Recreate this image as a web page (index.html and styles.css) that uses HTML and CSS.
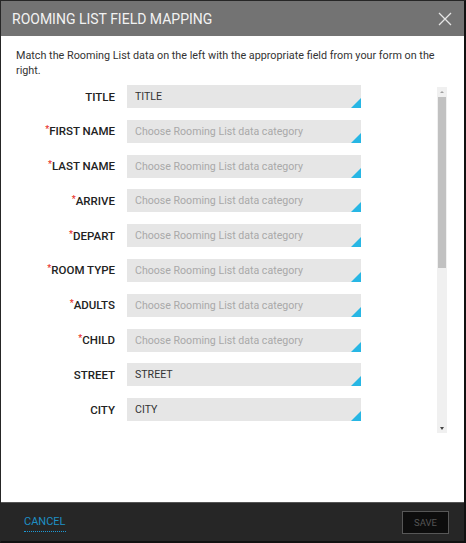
FILE: index.html
```html
<!DOCTYPE html>
<html>
<head>
  <meta charset="utf-8">
  <title>Rooming List Field Mapping</title>
  <link rel="stylesheet" href="styles.css">
</head>
<body>
  <div class="dialog">
    <div class="header">
      <h1>ROOMING LIST FIELD MAPPING</h1>
      <button class="close" aria-label="Close">
        <svg width="14" height="14" viewBox="0 0 14 14">
          <path d="M1 1 L13 13 M13 1 L1 13" stroke="#e6e6e6" stroke-width="1.3" fill="none"/>
        </svg>
      </button>
    </div>

    <div class="content">
      <p class="intro">Match the Rooming List data on the left with the appropriate field from your form on the right.</p>

      <div class="mapping">
        <div class="rows">
          <div class="row">
            <label>TITLE</label>
            <div class="field filled">TITLE</div>
          </div>
          <div class="row">
            <label><span class="req">*</span>FIRST NAME</label>
            <div class="field">Choose Rooming List data category</div>
          </div>
          <div class="row">
            <label><span class="req">*</span>LAST NAME</label>
            <div class="field">Choose Rooming List data category</div>
          </div>
          <div class="row">
            <label><span class="req">*</span>ARRIVE</label>
            <div class="field">Choose Rooming List data category</div>
          </div>
          <div class="row">
            <label><span class="req">*</span>DEPART</label>
            <div class="field">Choose Rooming List data category</div>
          </div>
          <div class="row">
            <label><span class="req">*</span>ROOM TYPE</label>
            <div class="field">Choose Rooming List data category</div>
          </div>
          <div class="row">
            <label><span class="req">*</span>ADULTS</label>
            <div class="field">Choose Rooming List data category</div>
          </div>
          <div class="row">
            <label><span class="req">*</span>CHILD</label>
            <div class="field">Choose Rooming List data category</div>
          </div>
          <div class="row">
            <label>STREET</label>
            <div class="field filled">STREET</div>
          </div>
          <div class="row">
            <label>CITY</label>
            <div class="field filled">CITY</div>
          </div>
        </div>

        <div class="scrollbar">
          <div class="arrow up"></div>
          <div class="thumb"></div>
          <div class="track"></div>
          <div class="arrow down"></div>
        </div>
      </div>
    </div>

    <div class="footer">
      <a class="cancel" href="#">CANCEL</a>
      <button class="save">SAVE</button>
    </div>
  </div>
</body>
</html>
```

FILE: styles.css
```css
body {
  margin: 0;
  font-family: Roboto, "Liberation Sans", sans-serif;
  background: #ffffff;
}

.dialog {
  width: 466px;
  height: 543px;
  box-sizing: border-box;
  border: 1px solid #262626;
  border-right: 2px solid #111;
  border-bottom: 2px solid #111;
  display: flex;
  flex-direction: column;
  background: #fff;
}

.header {
  height: 35px;
  background: #737373;
  display: flex;
  align-items: center;
  justify-content: space-between;
  padding: 0 12px 0 11px;
  flex-shrink: 0;
}

.header h1 {
  margin: 0;
  font-size: 14px;
  font-weight: 400;
  color: #f2f2f2;
}

.close {
  background: none;
  border: none;
  padding: 0;
  width: 14px;
  height: 14px;
  display: flex;
  cursor: pointer;
}

.content {
  flex: 1;
  padding: 12px 17px 0 15px;
  overflow: hidden;
}

.intro {
  margin: 0 0 7px 0;
  font-size: 10.8px;
  line-height: 15px;
  color: #333;
}

.mapping {
  display: flex;
  height: 348px;
}

.rows {
  flex: 1;
  overflow: hidden;
  display: flex;
  flex-direction: column;
  gap: 11.8px;
}

.row {
  display: flex;
  align-items: center;
  height: 23px;
  flex-shrink: 0;
}

.row label {
  width: 99px;
  text-align: right;
  font-size: 11.5px;
  font-weight: 500;
  color: #222;
  margin-right: 12px;
}

.req {
  color: #e8302a;
  font-size: 9px;
  vertical-align: top;
}

.field {
  position: relative;
  width: 234px;
  height: 23px;
  box-sizing: border-box;
  background: #e6e6e6;
  padding: 0 8px;
  display: flex;
  align-items: center;
  font-size: 10.6px;
  color: #a9a9a9;
}

.field.filled {
  color: #333;
}

.field::after {
  content: "";
  position: absolute;
  right: 0;
  bottom: 0;
  border-style: solid;
  border-width: 0 0 10px 10px;
  border-color: transparent transparent #27b6e4 transparent;
}

.scrollbar {
  width: 10px;
  margin-top: 2px;
  display: flex;
  flex-direction: column;
  background: #f0f0f0;
}

.arrow {
  height: 10px;
  position: relative;
}

.arrow::after {
  content: "";
  position: absolute;
  left: 3px;
  border-left: 2px solid transparent;
  border-right: 2px solid transparent;
}

.arrow.up::after {
  top: 4px;
  border-bottom: 2px solid #a0a0a0;
}

.arrow.down::after {
  top: 4px;
  border-top: 3px solid #444;
}

.thumb {
  height: 171px;
  background: #c1c1c1;
  margin: 0 1px;
}

.track {
  flex: 1;
}

.footer {
  height: 38px;
  flex-shrink: 0;
  background: #262626;
  border-top: 1px solid #555;
  display: flex;
  align-items: center;
  justify-content: space-between;
  padding: 0 15px 0 23px;
}

.cancel {
  color: #1e8fc5;
  font-size: 11px;
  text-decoration: none;
  padding-bottom: 3px;
  border-bottom: 1px dotted #1e9ad6;
  margin-top: 3px;
}

.save {
  width: 47px;
  height: 23px;
  background: #0d0d0d;
  border: 1px solid #575757;
  color: #555;
  font-family: Roboto, "Liberation Sans", sans-serif;
  font-size: 9.5px;
  padding: 0;
}
```
